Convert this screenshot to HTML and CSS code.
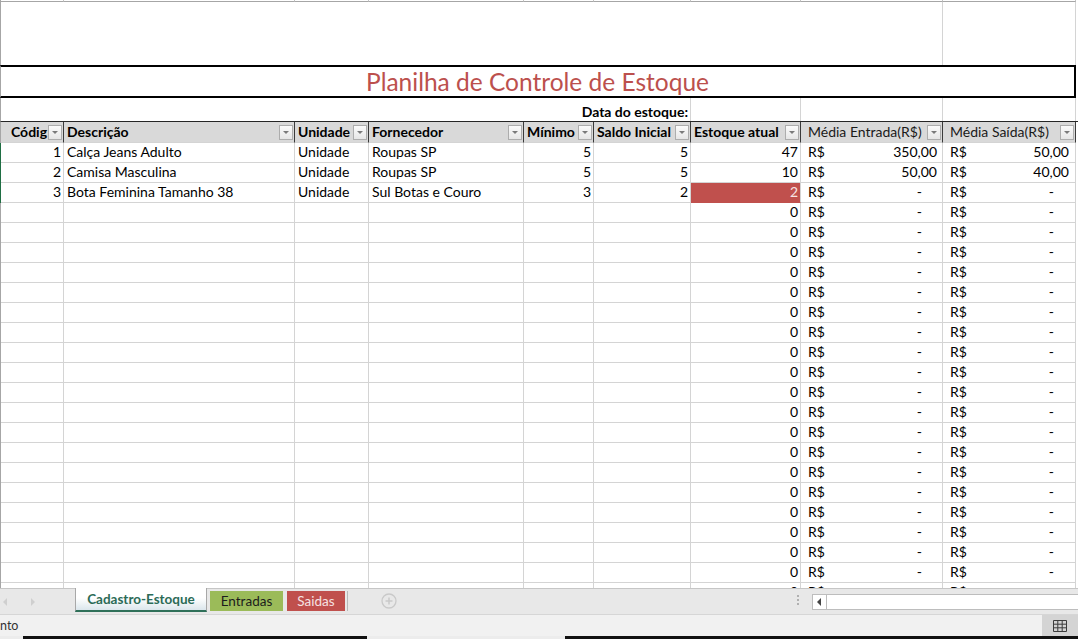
FILE: index.html
```html
<!DOCTYPE html>
<html lang="pt-BR">
<head>
    <meta charset="UTF-8">
    <title>Planilha de Controle de Estoque</title>
    <link rel="stylesheet" href="styles.css">
</head>
<body>
    <div class="sheet">
        <div class="row top-strip">
            <div class="c"></div><div class="c"></div><div class="c"></div><div class="c"></div><div class="c"></div>
            <div class="c"></div><div class="c"></div><div class="c"></div><div class="c"></div>
        </div>
        <div class="row blank-row">
            <div class="c span8"></div>
            <div class="c last"></div>
        </div>
        <div class="title-row">Planilha de Controle de Estoque</div>
        <div class="row date-row">
            <div class="c span6">Data do estoque:</div>
            <div class="c"></div>
            <div class="c"></div>
            <div class="c last"></div>
        </div>
        <div class="row head-row">
            <div class="h b pad-code">Códig<span class="dd"></span></div>
            <div class="h b">Descrição<span class="dd"></span></div>
            <div class="h b">Unidade<span class="dd"></span></div>
            <div class="h b">Fornecedor<span class="dd"></span></div>
            <div class="h b">Mínimo<span class="dd"></span></div>
            <div class="h b">Saldo Inicial<span class="dd"></span></div>
            <div class="h b">Estoque atual<span class="dd"></span></div>
            <div class="h wide">Média Entrada(R$)<span class="dd"></span></div>
            <div class="h wide last">Média Saída(R$)<span class="dd"></span></div>
        </div>
        <div id="rows"></div>
    </div>

    <div class="tabbar">
        <div class="nav">
            <span class="arrow arrow-left"></span>
            <span class="arrow arrow-right"></span>
        </div>
        <div class="tab active">Cadastro-Estoque</div>
        <div class="tab green">Entradas</div>
        <div class="tab red">Saidas</div>
        <div class="tab-sep"></div>
        <div class="add">
            <svg width="16" height="16" viewBox="0 0 16 16">
                <circle cx="8" cy="8" r="7" fill="none" stroke="#c9c9c9" stroke-width="1.3"/>
                <path d="M8 4.5v7M4.5 8h7" stroke="#c9c9c9" stroke-width="1.5"/>
            </svg>
        </div>
        <div class="grip"><i></i><i></i><i></i></div>
        <div class="hscroll"><div class="hbtn"></div></div>
    </div>

    <div class="statusbar">
        <span class="status-text">nto</span>
        <div class="view-btn">
            <svg width="16" height="14" viewBox="0 0 16 14">
                <path d="M1.5 1.5h13v11h-13zM1.5 5.2h13M1.5 8.8h13M5.8 1.5v11M10.2 1.5v11" fill="none" stroke="#3c3c3c" stroke-width="1"/>
            </svg>
        </div>
    </div>
    <div class="taskbar-edge"><span class="seg1"></span><span class="seg2"></span></div>

    <script>
        const items = [
            { code: 1, desc: 'Calça Jeans Adulto', unit: 'Unidade', supplier: 'Roupas SP', min: 5, start: 5, stock: 47, inAvg: '350,00', outAvg: '50,00' },
            { code: 2, desc: 'Camisa Masculina', unit: 'Unidade', supplier: 'Roupas SP', min: 5, start: 5, stock: 10, inAvg: '50,00', outAvg: '40,00' },
            { code: 3, desc: 'Bota Feminina Tamanho 38', unit: 'Unidade', supplier: 'Sul Botas e Couro', min: 3, start: 2, stock: 2, inAvg: '-', outAvg: '-' },
        ];
        const rows = document.querySelector('#rows');

        function money(value) {
            const dash = value === '-' ? ' dash' : '';
            return `<span>R$</span><span class="amt${dash}">${value}</span>`;
        }

        function addRow(item) {
            const row = document.createElement('div');
            row.className = 'row data-row' + (item ? ' sel' : '');
            const low = item && item.stock <= item.min;
            row.innerHTML = `
                <div class="c num">${item ? item.code : ''}</div>
                <div class="c txt">${item ? item.desc : ''}</div>
                <div class="c txt">${item ? item.unit : ''}</div>
                <div class="c txt">${item ? item.supplier : ''}</div>
                <div class="c num">${item ? item.min : ''}</div>
                <div class="c num">${item ? item.start : ''}</div>
                <div class="c num${low ? ' low' : ''}">${item ? item.stock : 0}</div>
                <div class="c money">${money(item ? item.inAvg : '-')}</div>
                <div class="c money last">${money(item ? item.outAvg : '-')}</div>`;
            rows.appendChild(row);
        }

        items.forEach(addRow);
        for (let i = 0; i < 20; i++) addRow(null);
    </script>
</body>
</html>
```

FILE: styles.css
```css
body {
    margin: 0;
    width: 1078px;
    height: 639px;
    overflow: hidden;
    background: #ffffff;
    font-family: Lato, "Open Sans", sans-serif;
    font-size: 14px;
    color: #000;
}

.sheet {
    height: 588px;
    overflow: hidden;
}

.row {
    display: grid;
    grid-template-columns: 63px 231px 74px 155px 70px 97px 110px 142px 133px;
    border-left: 1px solid #a6a6a6;
}

.c,
.h {
    box-sizing: border-box;
    border-right: 1px solid #d4d4d4;
    border-bottom: 1px solid #d4d4d4;
    white-space: nowrap;
    overflow: hidden;
}

.top-strip {
    height: 2px;
}

.top-strip .c {
    border-right-color: #c4c4c4;
    border-bottom: 1px solid #a6a6a6;
}

.blank-row {
    height: 63px;
}

.blank-row .c {
    border-bottom: none;
}

.span8 {
    grid-column: span 8;
}

.span6 {
    grid-column: span 6;
}

.title-row {
    box-sizing: border-box;
    height: 33px;
    width: 1076px;
    border: 2px solid #000;
    border-left-color: #a6a6a6;
    border-left-width: 1px;
    color: #bc504d;
    font-size: 24.5px;
    line-height: 30px;
    text-align: center;
}

.date-row {
    height: 23px;
}

.date-row .c {
    border-bottom: none;
    line-height: 27px;
}

.date-row .span6 {
    text-align: right;
    font-weight: bold;
    padding-right: 2px;
    border-right-color: #d4d4d4;
}

.head-row {
    height: 21px;
    border-top: 1px solid #262626;
}

.h {
    display: flex;
    align-items: center;
    background: #d9d9d9;
    border-right: 1px solid #3a3a3a;
    border-bottom: 1px solid #d4d4d4;
    padding-left: 3px;
    line-height: 18px;
}

.h.b {
    font-weight: bold;
}

.h.pad-code {
    padding-left: 10px;
}

.h.wide {
    padding-left: 7px;
    color: #1a1a1a;
}

.h.last {
    border-right-color: #3a3a3a;
}

.dd {
    position: relative;
    box-sizing: border-box;
    width: 14px;
    height: 15px;
    margin-left: auto;
    margin-right: 1px;
    flex: none;
    border: 1px solid #adadad;
    background: linear-gradient(#fbfbfb, #e6e6e6);
}

.dd::after {
    content: "";
    position: absolute;
    left: 3px;
    top: 5px;
    border-left: 3px solid transparent;
    border-right: 3px solid transparent;
    border-top: 3px solid #7a7a7a;
}

.data-row {
    height: 20px;
}

.data-row .c {
    line-height: 18px;
}

.data-row.sel {
    border-left-color: #1f6e43;
}

.num {
    text-align: right;
    padding-right: 2px;
}

.txt {
    padding-left: 3px;
}

.low {
    background: #c0504d;
    color: #f8e4e4;
    border-bottom-color: #c0504d;
}

.money {
    display: flex;
    justify-content: space-between;
    padding-left: 7px;
    padding-right: 5px;
}

.money.last {
    padding-right: 6px;
}

.amt.dash {
    padding-right: 15px;
}

/* sheet tabs */

.tabbar {
    display: flex;
    align-items: stretch;
    box-sizing: border-box;
    height: 26px;
    background: #e8e8e8;
    border-top: 1px solid #c6c6c6;
}

.nav {
    position: relative;
    width: 75px;
    flex: none;
}

.arrow {
    position: absolute;
    top: 9px;
    border-top: 4px solid transparent;
    border-bottom: 4px solid transparent;
}

.arrow-left {
    left: 3px;
    border-right: 4px solid #cfcfcf;
}

.arrow-right {
    left: 31px;
    border-left: 4px solid #cfcfcf;
}

.tab {
    flex: none;
    box-sizing: border-box;
    font-size: 13.5px;
    text-align: center;
}

.tab.active {
    width: 132px;
    height: 24px;
    margin-top: -1px;
    line-height: 23px;
    font-weight: bold;
    color: #2b6b57;
    background: linear-gradient(#ffffff 45%, #dbe6ec);
    border-left: 1px solid #a8a8a8;
    border-right: 1px solid #a8a8a8;
    border-bottom: 2px solid #2f7059;
}

.tab.green {
    width: 73px;
    height: 20px;
    margin: 2px 0 0 3px;
    line-height: 20px;
    background: #9bbb59;
    color: #1c1c1c;
}

.tab.red {
    width: 58px;
    height: 20px;
    margin: 2px 0 0 4px;
    line-height: 20px;
    background: #c0504d;
    color: #f6e2e2;
}

.tab-sep {
    width: 1px;
    height: 20px;
    margin: 2px 0 0 2px;
    background: #b8b8b8;
}

.add {
    margin: 4px 0 0 33px;
}

.grip {
    display: flex;
    flex-direction: column;
    gap: 2px;
    margin: 6px 0 0 auto;
}

.grip i {
    width: 2px;
    height: 2px;
    background: #b0b0b0;
}

.hscroll {
    box-sizing: border-box;
    width: 266px;
    height: 16px;
    margin: 5px 0 0 13px;
    background: #ffffff;
    border: 1px solid #bdbdbd;
    border-right: none;
}

.hbtn {
    position: relative;
    box-sizing: border-box;
    width: 14px;
    height: 14px;
    border-right: 1px solid #bdbdbd;
}

.hbtn::after {
    content: "";
    position: absolute;
    left: 4px;
    top: 3px;
    border-top: 4px solid transparent;
    border-bottom: 4px solid transparent;
    border-right: 4px solid #444;
}

/* status bar */

.statusbar {
    display: flex;
    align-items: center;
    box-sizing: border-box;
    height: 22px;
    background: #f1f1f1;
    border-top: 1px solid #d6d6d6;
}

.status-text {
    font-size: 12.5px;
    color: #333;
}

.view-btn {
    display: flex;
    align-items: center;
    justify-content: center;
    width: 36px;
    height: 21px;
    margin-left: auto;
    background: #d4d4d4;
}

.taskbar-edge {
    display: flex;
    height: 3px;
    background: #ececec;
}

.seg1 {
    width: 344px;
    margin-left: 23px;
    background: #111;
}

.seg2 {
    flex: 1;
    margin-left: 198px;
    background: #111;
}
```
